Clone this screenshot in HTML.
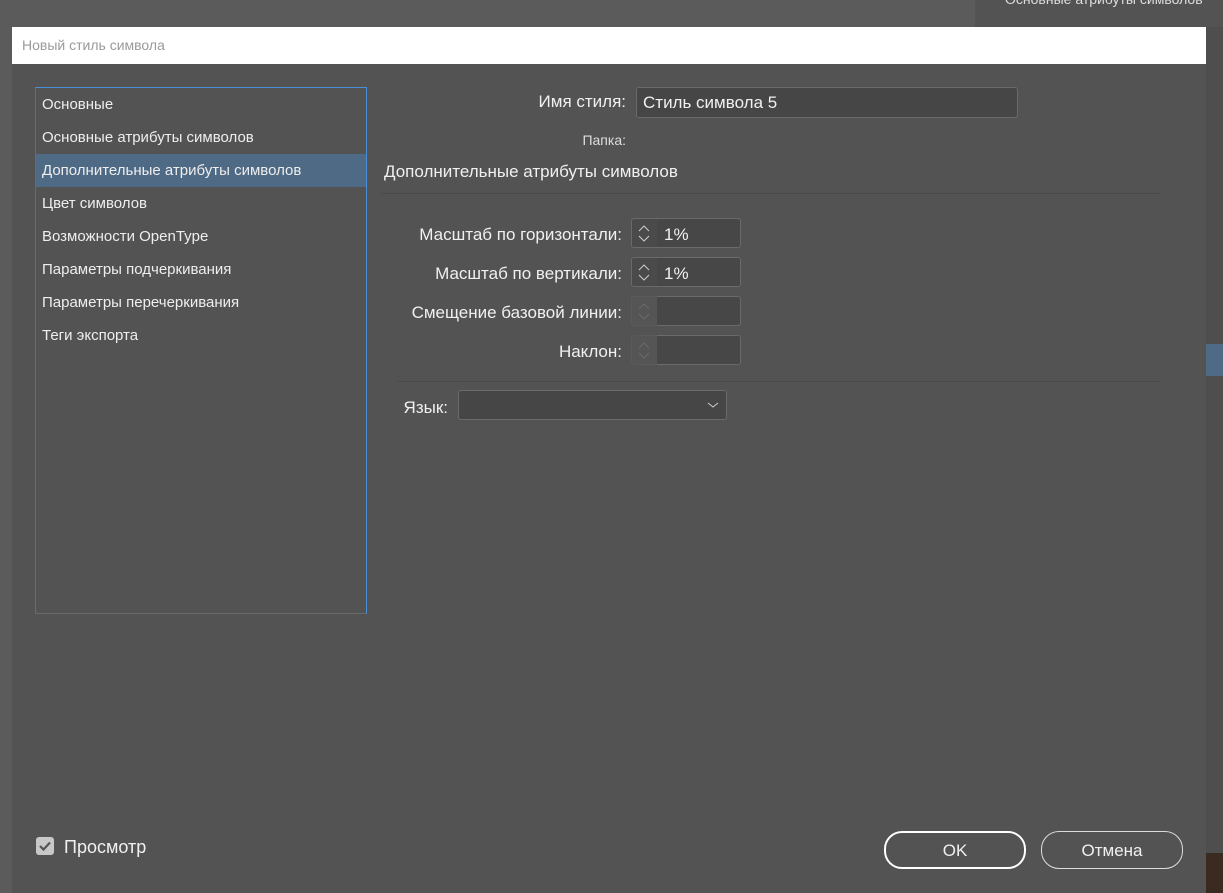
<!DOCTYPE html>
<html><head><meta charset="utf-8"><style>
*{margin:0;padding:0;box-sizing:border-box}
body{width:1223px;height:893px;background:#5b5b5b;position:relative;overflow:hidden;font-family:"Liberation Sans","DejaVu Sans",sans-serif;color:#f0f0f0}
.abs{position:absolute}
.dlg{left:12px;top:27px;width:1194px;height:866px;background:#535353}
.title{left:12px;top:27px;width:1194px;height:37px;background:#fff;color:#9a9a9a;font-size:14px;line-height:37px;padding-left:10px}
.list{left:35px;top:87px;width:332px;height:527px;border:1px solid #6a6a6a;border-top-color:#4a90d9;border-right-color:#4a90d9}
.item{position:absolute;left:0;width:330px;height:33px;line-height:33px;font-size:15px;padding-left:6px;color:#eee}
.sel{background:#4e6a85}
.lbl{font-size:17px;text-align:right;color:#f0f0f0}
.inp{background:#464646;border:1px solid #6a6a6a;border-radius:3px;font-size:17px;color:#f0f0f0;padding-left:6px}
.spin{width:27px;height:30px;border:1px solid #6a6a6a;border-radius:3px 0 0 3px;background:#4a4a4a}
.val{width:84px;height:30px;border:1px solid #6a6a6a;border-left:none;border-radius:0 3px 3px 0;background:#474747;font-size:17px;line-height:31px;padding-left:7px}
.btn{border-radius:18px;font-size:16px;text-align:center;line-height:34px;color:#f0f0f0}
</style></head><body>
<div class="abs" style="left:975px;top:0;width:248px;height:27px;background:#535353"></div>
<div class="abs" style="left:1005px;top:-9px;font-size:14px;color:#ddd">Основные атрибуты символов</div>
<div class="abs" style="left:1206px;top:27px;width:17px;height:866px;background:#4e4e4e"></div>
<div class="abs" style="left:1206px;top:344px;width:17px;height:32px;background:#4e6a85"></div>
<div class="abs" style="left:1206px;top:853px;width:17px;height:40px;background:#3a2a20"></div>
<div class="abs dlg"></div>
<div class="abs title">Новый стиль символа</div>
<div class="abs list">
<div class="item" style="top:0">Основные</div>
<div class="item" style="top:33px">Основные атрибуты символов</div>
<div class="item sel" style="top:66px">Дополнительные атрибуты символов</div>
<div class="item" style="top:99px">Цвет символов</div>
<div class="item" style="top:132px">Возможности OpenType</div>
<div class="item" style="top:165px">Параметры подчеркивания</div>
<div class="item" style="top:198px">Параметры перечеркивания</div>
<div class="item" style="top:231px">Теги экспорта</div>
</div>
<div class="abs lbl" style="left:430px;top:92px;width:196px">Имя стиля:</div>
<div class="abs inp" style="left:636px;top:87px;width:382px;height:31px;line-height:30px">Стиль символа 5</div>
<div class="abs" style="left:540px;top:132px;width:86px;text-align:right;font-size:14px;color:#ddd">Папка:</div>
<div class="abs" style="left:384px;top:162px;font-size:17px">Дополнительные атрибуты символов</div>
<div class="abs" style="left:381px;top:193px;width:780px;height:1px;background:#4a4a4a"></div>
<div class="abs lbl" style="left:380px;top:225px;width:242px">Масштаб по горизонтали:</div>
<div class="abs lbl" style="left:380px;top:264px;width:242px">Масштаб по вертикали:</div>
<div class="abs lbl" style="left:380px;top:303px;width:242px">Смещение базовой линии:</div>
<div class="abs lbl" style="left:380px;top:342px;width:242px">Наклон:</div>
<div class="abs spin" style="left:631px;top:218px"><svg width="25" height="28"><path d="M7 12l5-5 5 5M7 17l5 5 5-5" stroke="#ccc" fill="none"/></svg></div>
<div class="abs val" style="left:657px;top:218px">1%</div>
<div class="abs spin" style="left:631px;top:257px"><svg width="25" height="28"><path d="M7 12l5-5 5 5M7 17l5 5 5-5" stroke="#ccc" fill="none"/></svg></div>
<div class="abs val" style="left:657px;top:257px">1%</div>
<div class="abs spin" style="left:631px;top:296px;background:#555;border-color:#5a5a5a"><svg width="25" height="28"><path d="M7 12l5-5 5 5M7 17l5 5 5-5" stroke="#6a6a6a" fill="none"/></svg></div>
<div class="abs val" style="left:657px;top:296px"></div>
<div class="abs spin" style="left:631px;top:335px;background:#555;border-color:#5a5a5a"><svg width="25" height="28"><path d="M7 12l5-5 5 5M7 17l5 5 5-5" stroke="#6a6a6a" fill="none"/></svg></div>
<div class="abs val" style="left:657px;top:335px"></div>
<div class="abs" style="left:398px;top:381px;width:763px;height:1px;background:#4a4a4a"></div>
<div class="abs lbl" style="left:380px;top:398px;width:68px">Язык:</div>
<div class="abs inp" style="left:458px;top:390px;width:269px;height:30px"><svg class="abs" style="right:6px;top:9px" width="14" height="10"><path d="M2 3l5 4 5-4" stroke="#ccc" fill="none"/></svg></div>
<div class="abs" style="left:36px;top:837px;width:18px;height:18px;background:#c8c8c8;border-radius:3px"><svg width="18" height="18"><path d="M4 9l3.5 3.5L14 5.5" stroke="#555" stroke-width="2.2" fill="none"/></svg></div>
<div class="abs" style="left:64px;top:837px;font-size:18px">Просмотр</div>
<div class="abs btn" style="left:884px;top:831px;width:142px;height:38px;border:2px solid #fff;line-height:36px;font-size:17px">OK</div>
<div class="abs btn" style="left:1041px;top:831px;width:142px;height:38px;border:1px solid #ddd;line-height:38px;font-size:17px">Отмена</div>
</body></html>
